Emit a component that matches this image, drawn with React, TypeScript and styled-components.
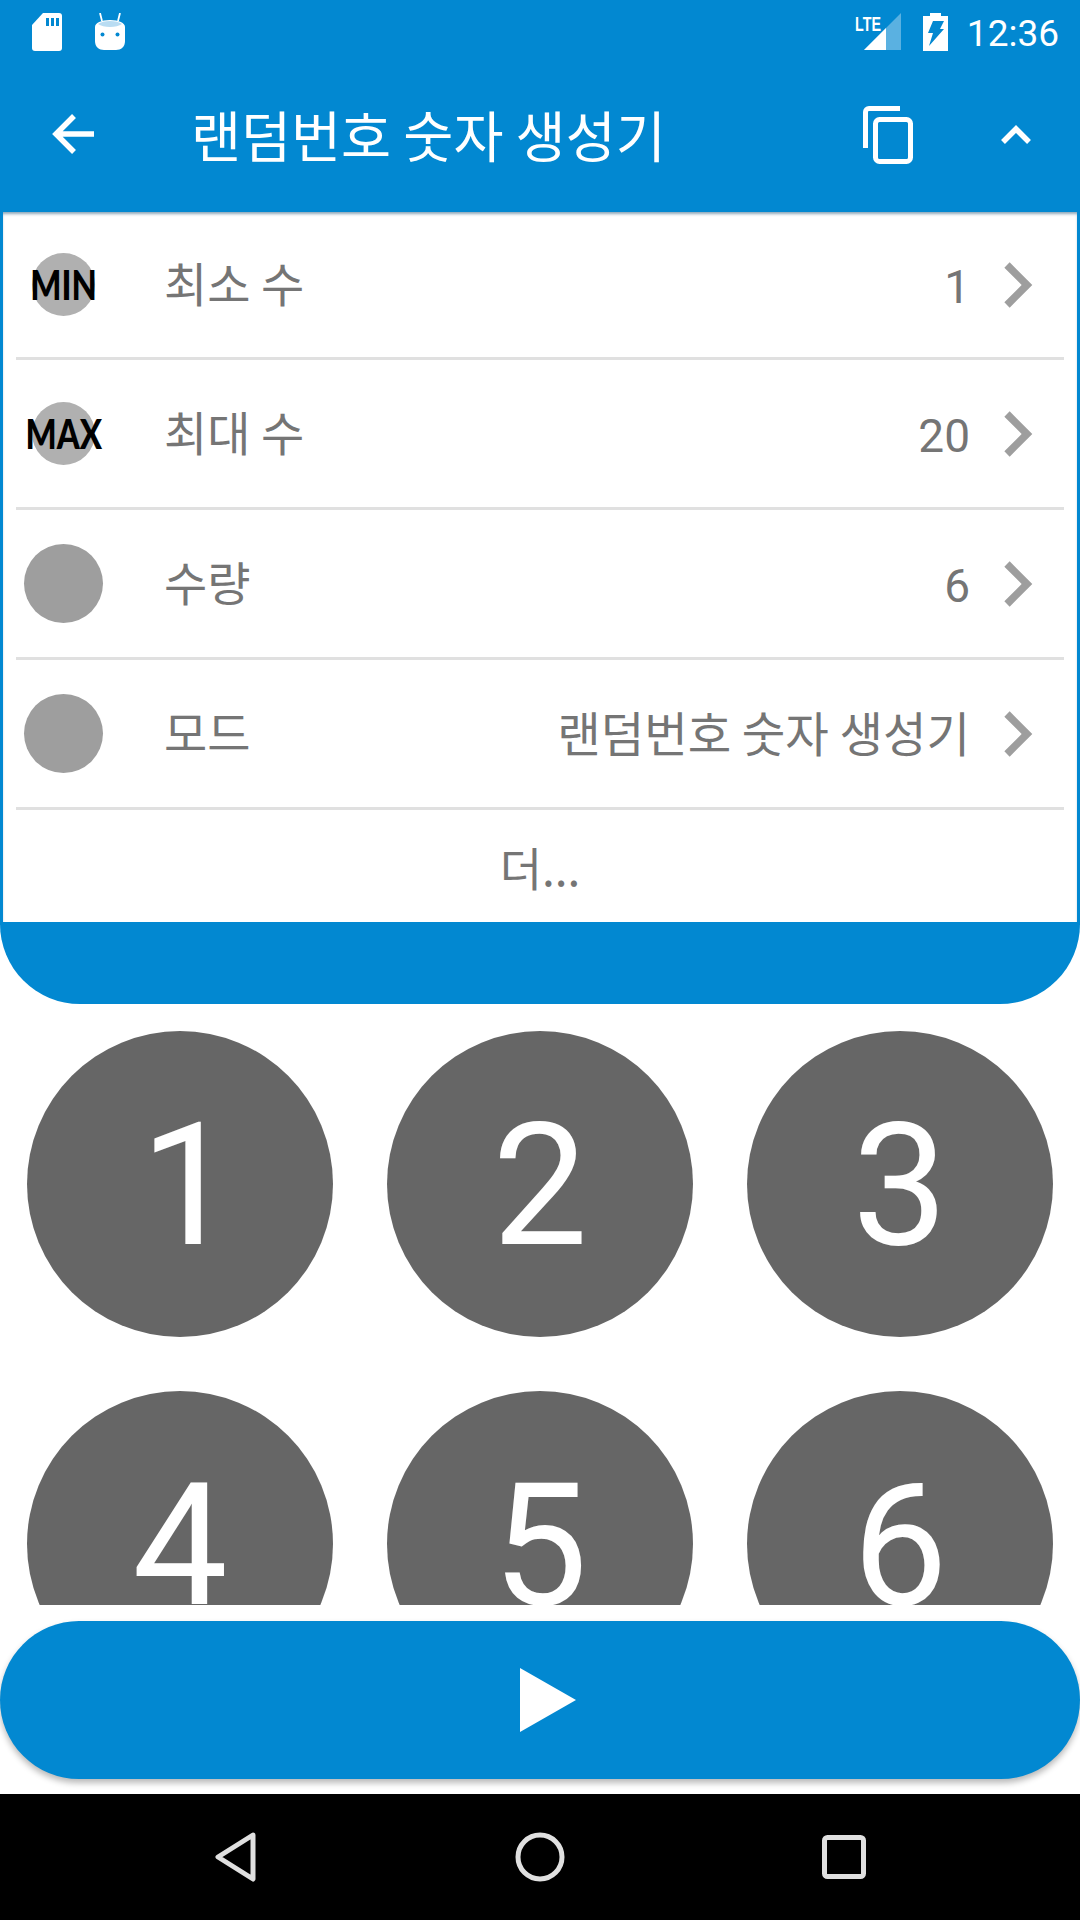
import React from 'react'
import styled, { createGlobalStyle } from 'styled-components'

const BLUE = '#0288d1'

const GlobalStyle = createGlobalStyle`
  html, body {
    margin: 0;
    padding: 0;
    background: #fff;
  }
  * {
    box-sizing: border-box;
  }
`

const Screen = styled.div`
  width: 1080px;
  height: 1920px;
  display: flex;
  flex-direction: column;
  overflow: hidden;
  background: #fff;
  font-family: Roboto, 'Noto Sans CJK KR', sans-serif;
`

const StatusBar = styled.div`
  height: 72px;
  flex: none;
  display: flex;
  align-items: center;
  padding: 0 21px 9px 31px;
  background: ${BLUE};
  color: #fff;
`

const StatusLeft = styled.div`
  display: flex;
  align-items: center;
  gap: 31px;
  flex: 1;
`

const LteGroup = styled.div`
  position: relative;
  width: 37px;
  height: 37px;
  margin-right: 22px;
`

const LteLabel = styled.span`
  position: absolute;
  left: -9px;
  top: 2px;
  font-family: 'Liberation Sans', sans-serif;
  font-size: 21px;
  line-height: 17px;
  font-weight: 700;
  transform: scaleX(0.68);
  transform-origin: left top;
`

const Clock = styled.span`
  margin: 4px 0 0 19px;
  font-size: 37px;
  line-height: 42px;
`

const Toolbar = styled.div`
  height: 140px;
  flex: none;
  display: flex;
  align-items: center;
  background: ${BLUE};
  padding: 0 48px 16px 52px;
`

const Title = styled.div`
  margin-left: 95px;
  flex: 1;
  color: #fff;
  font-family: 'Noto Sans CJK KR', sans-serif;
  font-size: 54.4px;
  line-height: 60px;
  white-space: nowrap;
`

const CopyButton = styled.svg`
  margin: 2px 87px 0 0;
  flex: none;
`

const SettingsPanel = styled.div`
  height: 792px;
  flex: none;
  padding: 0 0 79px;
  background: ${BLUE};
  border-radius: 0 0 80px 80px;
`

const SettingsCard = styled.div`
  height: 100%;
  background: #fff;
  border: 3px solid ${BLUE};
  border-top: 0;
  box-shadow: inset 0 3px 3px -1px rgba(0, 60, 100, 0.45);
  display: flex;
  flex-direction: column;
  padding: 0 13px;
`

const Row = styled.div<{ $first?: boolean }>`
  height: ${(p) => (p.$first ? 148 : 150)}px;
  flex: none;
  display: flex;
  align-items: center;
  border-bottom: 3px solid #e0e0e0;
  padding-right: 31px;
  color: #757575;
`

const IconSlot = styled.div`
  width: 148px;
  flex: none;
  display: flex;
  justify-content: flex-start;
  padding-left: 8px;
`

const BadgeCircle = styled.div<{ $size: number }>`
  width: ${(p) => p.$size}px;
  height: ${(p) => p.$size}px;
  margin-left: ${(p) => (79 - p.$size) / 2}px;
  border-radius: 50%;
  background: ${(p) => (p.$size > 70 ? '#9e9e9e' : '#b0b0b0')};
  display: flex;
  align-items: center;
  justify-content: center;
`

const BadgeText = styled.span`
  flex: none;
  color: #000;
  font-family: Lato, sans-serif;
  font-weight: 900;
  font-size: 41px;
  line-height: 1;
  white-space: nowrap;
  transform: scaleX(0.8);
`

const Label = styled.div`
  flex: 1;
  font-family: 'Noto Sans CJK KR', sans-serif;
  font-size: 47px;
  line-height: 56px;
  margin-bottom: 5px;
  white-space: nowrap;
`

const Value = styled.div<{ $korean?: boolean }>`
  font-family: ${(p) => (p.$korean ? "'Noto Sans CJK KR', sans-serif" : 'Roboto, sans-serif')};
  font-size: ${(p) => (p.$korean ? 47.3 : 46)}px;
  line-height: 56px;
  margin: ${(p) => (p.$korean ? '0 33px 4px 0' : '4px 33px 0 0')};
  white-space: nowrap;
`

const MoreRow = styled.div`
  flex: 1;
  display: flex;
  align-items: center;
  justify-content: center;
  color: #757575;
  font-family: 'Noto Sans CJK KR', sans-serif;
  font-size: 46px;
`

const DigitViewport = styled.div`
  height: 601px;
  flex: none;
  overflow: hidden;
`

const DigitGrid = styled.div`
  display: grid;
  grid-template-columns: repeat(3, 306px);
  gap: 54px;
  padding: 27px;
`

const DigitBall = styled.div<{ $nudge?: number }>`
  width: 306px;
  height: 306px;
  border-radius: 50%;
  background: #666;
  color: #fff;
  display: flex;
  align-items: center;
  justify-content: center;
  padding: 4px 0 0 ${(p) => p.$nudge ?? 0}px;
  font-size: 170px;
  line-height: 1;
`

const PlayButton = styled.div`
  height: 158px;
  flex: none;
  margin: 16px 0 15px;
  padding-left: 15px;
  border-radius: 79px;
  background: ${BLUE};
  box-shadow: 0 4px 6px rgba(0, 0, 0, 0.28);
  display: flex;
  align-items: center;
  justify-content: center;
`

const NavBar = styled.div`
  flex: 1;
  background: #000;
  position: relative;
  z-index: 1;
  display: flex;
  align-items: center;
  justify-content: center;
  gap: 257px;
`

const SdCardIcon = () => (
  <svg width="32" height="40" viewBox="0 0 32 40">
    <path d="M12 1H28a3 3 0 0 1 3 3V36a3 3 0 0 1-3 3H4a3 3 0 0 1-3-3V13Z" fill="#fff" />
    <path d="M15 6h3v8h-3zM20 6h3v8h-3zM25 6h3v8h-3z" fill={BLUE} />
  </svg>
)

const AndroidIcon = () => (
  <svg width="32" height="38" viewBox="0 0 32 38">
    <path d="M6 0l2 8M26 0l-2 8" stroke="#fff" strokeWidth="1.8" />
    <path d="M1 14c0-4 6-7 15-7s15 3 15 7v14c0 6-4 9-9 9H10c-5 0-9-3-9-9Z" fill="#fff" />
    <path d="M4 11c3-2 7-3 12-3s9 1 12 3c-3 2-7 3-12 3s-9-1-12-3Z" fill="#b9dcf2" />
    <circle cx="8.500" cy="21.500" r="2" fill={BLUE} />
    <circle cx="23.500" cy="21.500" r="2" fill={BLUE} />
  </svg>
)

const SignalIcon = () => (
  <svg width="37" height="37" viewBox="0 0 37 37">
    <path d="M37 0V37H0Z" fill="#fff" fillOpacity="0.35" />
    <path d="M22 15V37H0Z" fill="#fff" />
  </svg>
)

const BatteryIcon = () => (
  <svg width="25" height="38" viewBox="0 0 25 38">
    <path d="M7 0h11v3h7v35H0V3h7Z" fill="#fff" />
    <path d="M10 8h11l-4 8h4L6 33l4-13H5Z" fill={BLUE} />
  </svg>
)

const BackIcon = () => (
  <svg width="44" height="44" viewBox="0 0 44 44">
    <path d="M42 22H6M22 4 4 22l18 18" fill="none" stroke="#fff" strokeWidth="5.500" />
  </svg>
)

const CopyIcon = () => (
  <CopyButton width="50" height="58" viewBox="0 0 50 58">
    <path d="M37 2.500H6a3.500 3.500 0 0 0-3.500 3.500V42" fill="none" stroke="#fff" strokeWidth="5" />
    <rect x="12.500" y="13.500" width="35" height="42" rx="4" fill="none" stroke="#fff" strokeWidth="5" />
  </CopyButton>
)

const ChevronUp = () => (
  <svg width="32" height="22" viewBox="0 0 32 22">
    <path d="M3 19 16 6l13 13" fill="none" stroke="#fff" strokeWidth="5.500" />
  </svg>
)

const ChevronRight = () => (
  <svg width="30" height="48" viewBox="0 0 30 48">
    <path d="M4 4l20 20L4 44" fill="none" stroke="#9e9e9e" strokeWidth="7.500" />
  </svg>
)

const PlayIcon = () => (
  <svg width="56" height="64" viewBox="0 0 56 64">
    <path d="M0 0 56 32 0 64Z" fill="#fff" />
  </svg>
)

const NavBack = () => (
  <svg width="44" height="52" viewBox="0 0 44 52">
    <path d="M39 4 4 26l35 22Z" fill="none" stroke="#e0e0e0" strokeWidth="5" strokeLinejoin="round" />
  </svg>
)

const NavHome = () => (
  <svg width="50" height="50" viewBox="0 0 50 50">
    <circle cx="25" cy="25" r="22" fill="none" stroke="#e0e0e0" strokeWidth="5" />
  </svg>
)

const NavRecent = () => (
  <svg width="44" height="44" viewBox="0 0 44 44">
    <rect x="2.500" y="2.500" width="39" height="39" rx="3" fill="none" stroke="#e0e0e0" strokeWidth="5" />
  </svg>
)

const settings = [
  { badge: 'MIN', size: 63, label: '최소 수', value: '1' },
  { badge: 'MAX', size: 63, label: '최대 수', value: '20' },
  { badge: '', size: 79, label: '수량', value: '6' },
  { badge: '', size: 79, label: '모드', value: '랜덤번호 숫자 생성기', korean: true },
]

const App: React.FC = () => (
  <Screen>
    <GlobalStyle />
    <StatusBar>
      <StatusLeft>
        <SdCardIcon />
        <AndroidIcon />
      </StatusLeft>
      <LteGroup>
        <LteLabel>LTE</LteLabel>
        <SignalIcon />
      </LteGroup>
      <BatteryIcon />
      <Clock>12:36</Clock>
    </StatusBar>

    <Toolbar>
      <BackIcon />
      <Title>랜덤번호 숫자 생성기</Title>
      <CopyIcon />
      <ChevronUp />
    </Toolbar>

    <SettingsPanel>
      <SettingsCard>
        {settings.map((item, index) => (
          <Row key={item.label} $first={index === 0}>
            <IconSlot>
              <BadgeCircle $size={item.size}>
                {item.badge && <BadgeText>{item.badge}</BadgeText>}
              </BadgeCircle>
            </IconSlot>
            <Label>{item.label}</Label>
            <Value $korean={item.korean}>{item.value}</Value>
            <ChevronRight />
          </Row>
        ))}
        <MoreRow>더...</MoreRow>
      </SettingsCard>
    </SettingsPanel>

    <DigitViewport>
      <DigitGrid>
        {[1, 2, 3, 4, 5, 6].map((n) => (
          <DigitBall key={n} $nudge={n === 1 ? 16 : 0}>
            {n}
          </DigitBall>
        ))}
      </DigitGrid>
    </DigitViewport>

    <PlayButton>
      <PlayIcon />
    </PlayButton>

    <NavBar>
      <NavBack />
      <NavHome />
      <NavRecent />
    </NavBar>
  </Screen>
)

export default App
